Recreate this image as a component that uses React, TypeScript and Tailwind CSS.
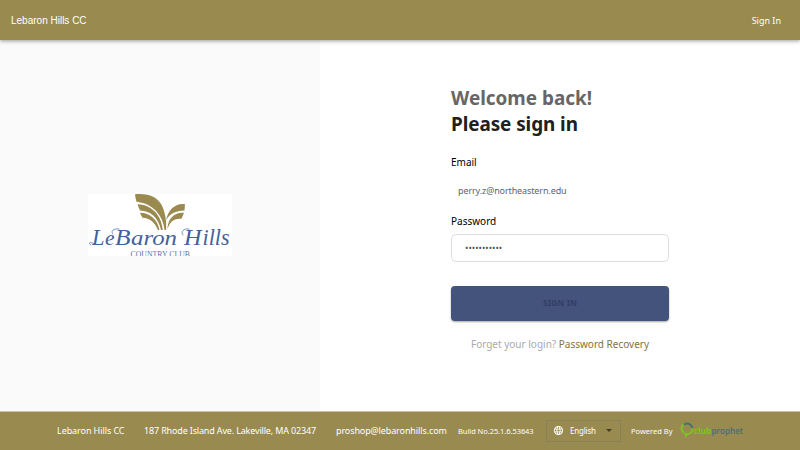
import React from 'react';
import { MdLanguage } from 'react-icons/md';

function ClubLogo() {
  return (
    <svg viewBox="0 0 144 62" className="block h-[62px] w-[144px] bg-white" role="img">
      <g fill="#9a8a50">
        <path d="M47 .3C60-1 71 3 75 14C78 22 78.500 29 78 36L76.500 36C75.500 23 66 9.500 48.500 7.800Q47.300 4 47 .3Z" />
        <path d="M49.500 10.300C62 10.800 73 19 74.800 36L73 36C70 23.500 63 17 52 16.500Q50.500 13.500 49.500 10.300Z" />
        <path d="M52 18.800C62 18.800 69.500 25.500 71.500 36L70 36C66.500 28 62 24 54.500 23.700Q52.700 21 52 18.800Z" />
        <path d="M78 26.500C80 16 87 9 97 10.200L96.500 16.500C88 16.500 81 20 78 26.500Z" />
        <path d="M79.500 35.500C79.500 25 86 18 96 18.800L93.500 24.800C86 24 81.500 28 79.500 35.500Z" />
      </g>
      <g fill="#43619c" fontFamily="Liberation Serif, serif" fontStyle="italic">
        <text y="51">
          <tspan x="4" fontSize="24" textLength="12.500" lengthAdjust="spacingAndGlyphs">L</tspan>
          <tspan x="17" fontSize="20" textLength="9.500" lengthAdjust="spacingAndGlyphs">e</tspan>
          <tspan x="27" fontSize="24" textLength="15.500" lengthAdjust="spacingAndGlyphs">B</tspan>
          <tspan x="43" fontSize="20" textLength="46" lengthAdjust="spacingAndGlyphs">
            aron
          </tspan>
        </text>
        <text y="51">
          <tspan x="96" fontSize="24" textLength="17.500" lengthAdjust="spacingAndGlyphs">H</tspan>
          <tspan x="114.500" fontSize="23" textLength="27" lengthAdjust="spacingAndGlyphs">
            ills
          </tspan>
        </text>
      </g>
      <text x="42.500" y="62.900" fill="#5a73a4" fontFamily="Liberation Serif, serif" fontSize="7.500" textLength="59.500" lengthAdjust="spacingAndGlyphs">
        COUNTRY CLUB
      </text>
      <g fill="none" stroke="#43619c" strokeWidth=".7" strokeLinecap="round">
        <path d="M6 50C2 47 0 49 2.500 51" />
        <path d="M31 35C26 34 22 37 25 40" />
        <path d="M101 35C96 34 92 38 95 41" />
      </g>
    </svg>
  );
}

function ProphetLogo() {
  return (
    <svg viewBox="0 0 68 20" className="ml-[7px] block h-[20px] w-[68px]" role="img">
      <g fill="none" strokeLinecap="round">
        <path d="M3.500 11.500C0 8 1.500 4 4.500 3.300" stroke="#7fc228" strokeWidth="2" />
        <path d="M4.500 3.300C8 1.500 12 3.500 12.200 7" stroke="#49706f" strokeWidth="2" />
        <path d="M12.200 8C12 11 10 13 7 13" stroke="#7fc228" strokeWidth="1.800" />
      </g>
      <path d="M4 11.500L8.500 13L5.500 17Z" fill="#7fc228" />
      <text y="13" fontFamily="Open Sans, sans-serif" fontSize="9.500">
        <tspan x="13.500" fontWeight="700" fill="#80c41c" textLength="18" lengthAdjust="spacingAndGlyphs">
          club
        </tspan>
        <tspan x="31.500" fontWeight="600" fill="#4a6a78" textLength="31.500" lengthAdjust="spacingAndGlyphs">
          prophet
        </tspan>
      </text>
    </svg>
  );
}

export default function App() {
  return (
    <div className="flex h-[450px] w-[800px] flex-col overflow-hidden bg-white font-['Noto_Sans',sans-serif] text-black">
      <header className="z-10 flex h-10 shrink-0 items-center justify-between bg-[#998a50] pr-[19px] pl-[11px] text-white shadow-[0_1px_4px_rgba(0,0,0,0.4)]">
        <span className="pt-px font-['Liberation_Sans',sans-serif] text-[10px] leading-4">Lebaron Hills CC</span>
        <a className="pt-px text-[9px] leading-4">Sign In</a>
      </header>

      <main className="flex min-h-0 flex-1">
        <section className="flex w-80 items-center justify-center bg-[#fafafa] pb-[1px]">
          <ClubLogo />
        </section>
        <section className="flex flex-1 justify-center pt-[45px]">
          <form className="flex w-[218px] flex-col">
            <h1 className="text-[18.9px] leading-[26px] font-bold whitespace-nowrap">
              <span className="block text-[#666]">Welcome back!</span>
              <span className="block tracking-[-0.07px] text-[#202020]">Please sign in</span>
            </h1>
            <label className="mt-[17px] text-[10px] leading-4">Email</label>
            <div className="mt-[6px] flex h-7 items-center pl-[7px] pt-px text-[9px] tracking-[-0.11px] text-[#59666d]">perry.z@northeastern.edu</div>
            <label className="mt-[9px] text-[10px] leading-4">Password</label>
            <div className="mt-[5px] flex h-[28px] items-center rounded-[5px] border border-[#dcdcdc] pl-[13px] text-[9px] leading-4 text-[#4c5458]">
              •••••••••••
            </div>
            <button type="button" className="mt-6 h-[35px] rounded-[4px] bg-[#43537c] text-[8.500px] font-bold tracking-[0.1px] text-[#323f64] shadow-[0_1px_2px_rgba(0,0,0,0.35)]">
              SIGN IN
            </button>
            <p className="mt-[15px] text-center text-[10px] leading-4 whitespace-nowrap text-[#aaa]">
              Forget your login? <a className="text-[#82743a]">Password Recovery</a>
            </p>
          </form>
        </section>
      </main>

      <footer className="flex h-[39px] shrink-0 items-center border-t border-[#c8c2a8] bg-[#998a50] pl-[57px] text-[9px] whitespace-nowrap text-white">
        <span className="w-[87px] tracking-[-0.08px]">Lebaron Hills CC</span>
        <span className="w-[192px] tracking-[-0.16px]">187 Rhode Island Ave. Lakeville, MA 02347</span>
        <span className="w-[122px] tracking-[-0.11px]">proshop@lebaronhills.com</span>
        <span className="w-[88px] pt-px text-[7.500px] tracking-[-0.06px]">Build No.25.1.6.53643</span>
        <div className="flex h-[22px] w-[75px] items-center border border-[#8b7f58] pb-px pl-[6px] text-[8px]">
          <MdLanguage className="size-[11px]" />
          <span className="ml-[6px] w-[36px] pt-px tracking-[-0.2px]">English</span>
          <i className="border-x-[3px] border-t-[3px] border-x-transparent border-t-[#453e24]" />
        </div>
        <span className="ml-[10px] w-[42px] pt-px text-[7.500px]">Powered By</span>
        <ProphetLogo />
      </footer>
    </div>
  );
}
